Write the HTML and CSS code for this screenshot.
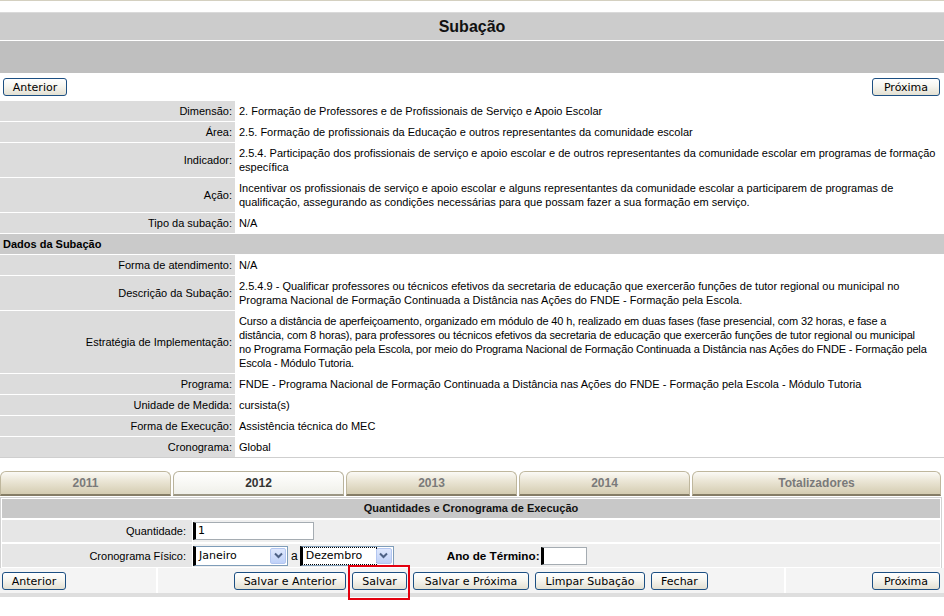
FILE: index.html
```html
<!DOCTYPE html>
<html lang="pt-BR">
<head>
<meta charset="utf-8">
<title>Subação</title>
<link rel="stylesheet" href="styles.css">
</head>
<body>
<div class="page">
  <div class="topgap"></div>
  <div class="title">Subação</div>
  <div class="subbar"></div>
  <div class="nav">
    <button class="btn w-ant">Anterior</button>
    <button class="btn w-prox">Próxima</button>
  </div>
  <table class="info">
    <tr><th>Dimensão:</th><td>2. Formação de Professores e de Profissionais de Serviço e Apoio Escolar</td></tr>
    <tr><th>Área:</th><td>2.5. Formação de profissionais da Educação e outros representantes da comunidade escolar</td></tr>
    <tr><th>Indicador:</th><td>2.5.4. Participação dos profissionais de serviço e apoio escolar e de outros representantes da comunidade escolar em programas de formação<br>específica</td></tr>
    <tr><th>Ação:</th><td>Incentivar os profissionais de serviço e apoio escolar e alguns representantes da comunidade escolar a participarem de programas de<br>qualificação, assegurando as condições necessárias para que possam fazer a sua formação em serviço.</td></tr>
    <tr><th>Tipo da subação:</th><td>N/A</td></tr>
    <tr class="section"><td colspan="2">Dados da Subação</td></tr>
    <tr><th>Forma de atendimento:</th><td>N/A</td></tr>
    <tr><th>Descrição da Subação:</th><td>2.5.4.9 - Qualificar professores ou técnicos efetivos da secretaria de educação que exercerão funções de tutor regional ou municipal no<br>Programa Nacional de Formação Continuada a Distância nas Ações do FNDE - Formação pela Escola.</td></tr>
    <tr><th>Estratégia de Implementação:</th><td class="tight">Curso a distância de aperfeiçoamento, organizado em módulo de 40 h, realizado em duas fases (fase presencial, com 32 horas, e fase a<br>distância, com 8 horas), para professores ou técnicos efetivos da secretaria de educação que exercerão funções de tutor regional ou municipal<br>no Programa Formação pela Escola, por meio do Programa Nacional de Formação Continuada a Distância nas Ações do FNDE - Formação pela<br>Escola - Módulo Tutoria.</td></tr>
    <tr><th>Programa:</th><td>FNDE - Programa Nacional de Formação Continuada a Distância nas Ações do FNDE - Formação pela Escola - Módulo Tutoria</td></tr>
    <tr><th>Unidade de Medida:</th><td>cursista(s)</td></tr>
    <tr><th>Forma de Execução:</th><td>Assistência técnica do MEC</td></tr>
    <tr><th>Cronograma:</th><td>Global</td></tr>
  </table>

  <div class="tabs">
    <div class="tab">2011</div>
    <div class="tab active">2012</div>
    <div class="tab">2013</div>
    <div class="tab">2014</div>
    <div class="tab">Totalizadores</div>
  </div>

  <div class="panel">
    <div class="panel-head">Quantidades e Cronograma de Execução</div>
    <table class="form">
      <tr>
        <th>Quantidade:</th>
        <td><span class="input qty">1</span></td>
      </tr>
      <tr>
        <th>Cronograma Físico:</th>
        <td>
          <div class="sched">
            <span class="select">
              <span class="sel-text">Janeiro</span>
              <span class="sel-btn"><svg width="9" height="7" viewBox="0 0 9 7"><path d="M1 1.5 L4.5 5 L8 1.5" fill="none" stroke="#4d6185" stroke-width="2"/></svg></span>
            </span>
            <span class="a">a</span>
            <span class="select focus">
              <span class="sel-text"><span class="dotted">Dezembro</span></span>
              <span class="sel-btn"><svg width="9" height="7" viewBox="0 0 9 7"><path d="M1 1.5 L4.5 5 L8 1.5" fill="none" stroke="#4d6185" stroke-width="2"/></svg></span>
            </span>
            <span class="ano">Ano de Término:</span>
            <span class="input ano-in"></span>
          </div>
        </td>
      </tr>
    </table>
  </div>

  <div class="actions">
    <div class="cell cell-left"><button class="btn w-ant">Anterior</button></div>
    <div class="cell cell-mid">
      <button class="btn w-sant">Salvar e Anterior</button>
      <span class="mark-wrap"><button class="btn w-salvar">Salvar</button><span class="mark"></span></span>
      <button class="btn w-sprox">Salvar e Próxima</button>
      <button class="btn w-limpar">Limpar Subação</button>
      <button class="btn w-fechar">Fechar</button>
    </div>
    <div class="cell cell-right"><button class="btn w-prox">Próxima</button></div>
  </div>
  <div class="bottombar"></div>
</div>
</body>
</html>
```

FILE: styles.css
```css
* { box-sizing: border-box; }
html, body { margin: 0; padding: 0; background: #fff; }
body {
  font-family: "Liberation Sans", Arial, sans-serif;
  font-size: 11px;
  color: #000;
}
.page { width: 944px; min-height: 616px; }

.topgap {
  height: 12px;
  border-top: 1px solid #d4d0c0;
}
.title {
  border-top: 1px solid #dadada;
  background: #cccccc;
  height: 29px;
  line-height: 27px;
  text-align: center;
  font-weight: bold;
  font-size: 16px;
  color: #111;
  border-bottom: 1px solid #fff;
}
.subbar {
  background: #bfbfbf;
  height: 32px;
}
.nav {
  display: flex;
  justify-content: space-between;
  height: 27px;
  padding: 5px 4px 0 3px;
}

.btn {
  font-family: "DejaVu Sans", Verdana, sans-serif;
  font-size: 11px;
  height: 18px;
  line-height: 15px;
  padding: 0;
  text-align: center;
  border: 1px solid #1c4f82;
  border-radius: 3px;
  background: linear-gradient(#ffffff 0%, #f6f5ef 45%, #e3e0d2 100%);
  color: #000;
  margin: 0;
}
.w-ant { width: 64px; }
.w-prox { width: 68px; }
.w-sant { width: 112px; }
.w-salvar { width: 55px; }
.w-sprox { width: 116px; }
.w-limpar { width: 110px; }
.w-fechar { width: 57px; }

.info {
  width: 100%;
  border-collapse: collapse;
}
.info th, .info td {
  border-top: 1px solid #fff;
  padding: 3px 0 3px 4px;
  line-height: 14px;
  font-size: 11px;
}
.info th {
  width: 235px;
  background: #dcdcdc;
  text-align: right;
  font-weight: normal;
  padding-right: 3px;
  vertical-align: middle;
  white-space: nowrap;
}
.info td {
  background: #fff;
  vertical-align: top;
}
.info td.tight { letter-spacing: -0.15px; }
.info tr.section td {
  background: #cacaca;
  font-weight: bold;
  padding-left: 3px;
}
.info tr:last-child th, .info tr:last-child td {
  border-bottom: 1px solid #cfcfcf;
}

.tabs {
  display: grid;
  grid-template-columns: 171px 171px 171px 171px 1fr;
  column-gap: 2px;
  margin: 13px 3px 0 0;
  height: 25px;
}
.tab {
  border: 1px solid #bfb79d;
  border-bottom: 2px solid #857d66;
  border-radius: 6px 6px 0 0;
  background: linear-gradient(#fbfaf6 0%, #ebe6d6 40%, #d4ccb1 100%);
  color: #7a7a7a;
  font-weight: bold;
  font-size: 12px;
  text-align: center;
  line-height: 22px;
}
.tab.active {
  background: linear-gradient(#ffffff 0%, #f6f6f2 60%, #efefe9 100%);
  color: #333;
  border-color: #b9b39c;
  border-bottom: 2px solid #9b9684;
}

.panel {
  margin: 1px 2px 0 0;
  border: 1px solid #d2d2d2;
  border-bottom: none;
}
.panel-head {
  margin: 1px;
  background: #c8c8c8;
  height: 19px;
  line-height: 19px;
  text-align: center;
  font-weight: bold;
  color: #111;
}
.form {
  width: 100%;
  border-collapse: separate;
  border-spacing: 1px 2px;
  margin-top: -1px;
  margin-bottom: -1px;
}
.form th {
  width: 190px;
  background: #e6e6e6;
  text-align: right;
  font-weight: normal;
  padding: 0 6px 0 0;
  white-space: nowrap;
}
.form td {
  background: #efefef;
  padding: 0;
}
.form tr:first-child th, .form tr:first-child td { height: 22px; }
.form tr:last-child th, .form tr:last-child td { height: 23px; }

.input {
  display: inline-block;
  vertical-align: middle;
  height: 18px;
  background: #fff;
  border: 1px solid #a5acb2;
  border-left: 3px solid #000;
  font-family: "DejaVu Sans", Verdana, sans-serif;
  font-size: 11px;
  line-height: 16px;
  padding-left: 2px;
}
.qty { width: 121px; }

.sched {
  display: flex;
  align-items: center;
}
.select {
  display: inline-flex;
  align-items: center;
  width: 95px;
  height: 20px;
  background: #fff;
  border: 1px solid #7f9db9;
  border-left: 3px solid #000;
  padding: 1px 1px 1px 0;
  font-family: "DejaVu Sans", Verdana, sans-serif;
  font-size: 11px;
}
.sel-text {
  flex: 1;
  padding-left: 3px;
  line-height: 16px;
  height: 16px;
}
.dotted {
  display: block;
  margin-left: -3px;
  padding-left: 3px;
  outline: 1px dotted #000;
  outline-offset: 0;
  height: 16px;
}
.sel-btn {
  width: 16px;
  height: 16px;
  border: 1px solid #b3c6f0;
  border-radius: 2px;
  background: linear-gradient(#dfe8fd, #bfd1f8);
  display: flex;
  align-items: center;
  justify-content: center;
}
.a { margin: 0 2px 0 3px; font-size: 12px; }
.select.focus { width: 94px; }
.ano {
  margin-left: 53px;
  font-weight: bold;
  font-size: 11.7px;
  margin-right: 1px;
}
.ano-in { width: 46px; height: 18px; }

.actions {
  display: flex;
  gap: 2px;
}
.cell {
  background: #f4f4f4;
  height: 25px;
  padding-top: 4px;
  display: flex;
  align-items: flex-start;
}
.cell-left { width: 156px; padding-left: 2px; }
.cell-mid { flex: 1; justify-content: center; gap: 6px; }
.cell-right { width: 158px; justify-content: flex-end; padding-right: 4px; }

.mark-wrap { position: relative; display: block; height: 18px; }
.mark {
  position: absolute;
  left: -4px;
  top: -7px;
  width: 62px;
  height: 35px;
  border: 2px solid #e3000f;
}
.bottombar {
  height: 4px;
  background: #dedede;
}
```
